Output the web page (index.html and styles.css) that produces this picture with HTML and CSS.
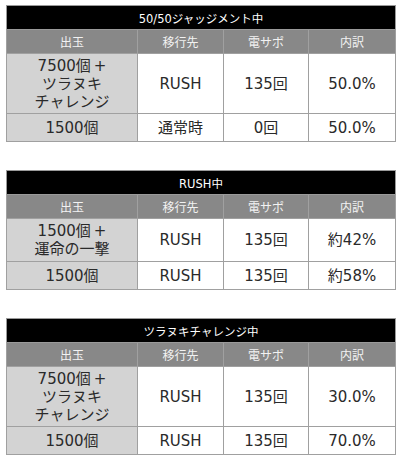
FILE: index.html
```html
<!DOCTYPE html>
<html lang="ja">
<head>
<meta charset="utf-8">
<link rel="stylesheet" href="styles.css">
</head>
<body>
<div class="page">
  <table class="tbl">
    <colgroup><col class="c1"><col class="c2"><col class="c3"><col class="c4"></colgroup>
    <tr class="title"><th colspan="4">50/50ジャッジメント中</th></tr>
    <tr class="head"><th>出玉</th><th>移行先</th><th>電サポ</th><th>内訳</th></tr>
    <tr class="r3"><td class="lab">7500個<span class="plus">+</span><br>ツラヌキ<br>チャレンジ</td><td>RUSH</td><td>135回</td><td>50.0%</td></tr>
    <tr class="r1"><td class="lab">1500個</td><td>通常時</td><td>0回</td><td>50.0%</td></tr>
  </table>
  <table class="tbl">
    <colgroup><col class="c1"><col class="c2"><col class="c3"><col class="c4"></colgroup>
    <tr class="title"><th colspan="4">RUSH中</th></tr>
    <tr class="head"><th>出玉</th><th>移行先</th><th>電サポ</th><th>内訳</th></tr>
    <tr class="r2"><td class="lab">1500個<span class="plus">+</span><br>運命の一撃</td><td>RUSH</td><td>135回</td><td>約42%</td></tr>
    <tr class="r1"><td class="lab">1500個</td><td>RUSH</td><td>135回</td><td>約58%</td></tr>
  </table>
  <table class="tbl">
    <colgroup><col class="c1"><col class="c2"><col class="c3"><col class="c4"></colgroup>
    <tr class="title"><th colspan="4">ツラヌキチャレンジ中</th></tr>
    <tr class="head"><th>出玉</th><th>移行先</th><th>電サポ</th><th>内訳</th></tr>
    <tr class="r3"><td class="lab">7500個<span class="plus">+</span><br>ツラヌキ<br>チャレンジ</td><td>RUSH</td><td>135回</td><td>30.0%</td></tr>
    <tr class="r1"><td class="lab">1500個</td><td>RUSH</td><td>135回</td><td>70.0%</td></tr>
  </table>
</div>
</body>
</html>
```

FILE: styles.css
```css
html, body {
  margin: 0;
  padding: 0;
  background: #ffffff;
}
.page {
  padding: 5px 5px 0 6px;
  display: flex;
  flex-direction: column;
  gap: 28px;
}
.tbl {
  width: 389px;
  border-collapse: collapse;
  table-layout: fixed;
  font-family: "DejaVu Sans", "Noto Sans CJK JP", sans-serif;
  color: #2a2a2a;
  border: 1px solid #9a9a9a;
}
.c1 { width: 131px; }
.c2 { width: 86px; }
.c3 { width: 85px; }
.c4 { width: 87px; }
.tbl th, .tbl td {
  padding: 0;
  text-align: center;
  vertical-align: middle;
  border: 1px solid #a0a0a0;
}
.title th {
  background: #000000;
  color: #ffffff;
  font-size: 11.5px;
  font-weight: normal;
  height: 23px;
  border-color: #9a9a9a;
}
.head th {
  background: #888888;
  color: #f2f2f2;
  font-size: 12px;
  font-weight: normal;
  height: 23px;
}
.tbl td {
  font-size: 15px;
  line-height: 18px;
  background: #ffffff;
}
.tbl td.lab {
  background: #d3d3d3;
}
.plus {
  margin-left: 3px;
}
.r3 td { height: 59px; }
.r2 td { height: 42px; }
.r1 td { height: 27px; }
```
